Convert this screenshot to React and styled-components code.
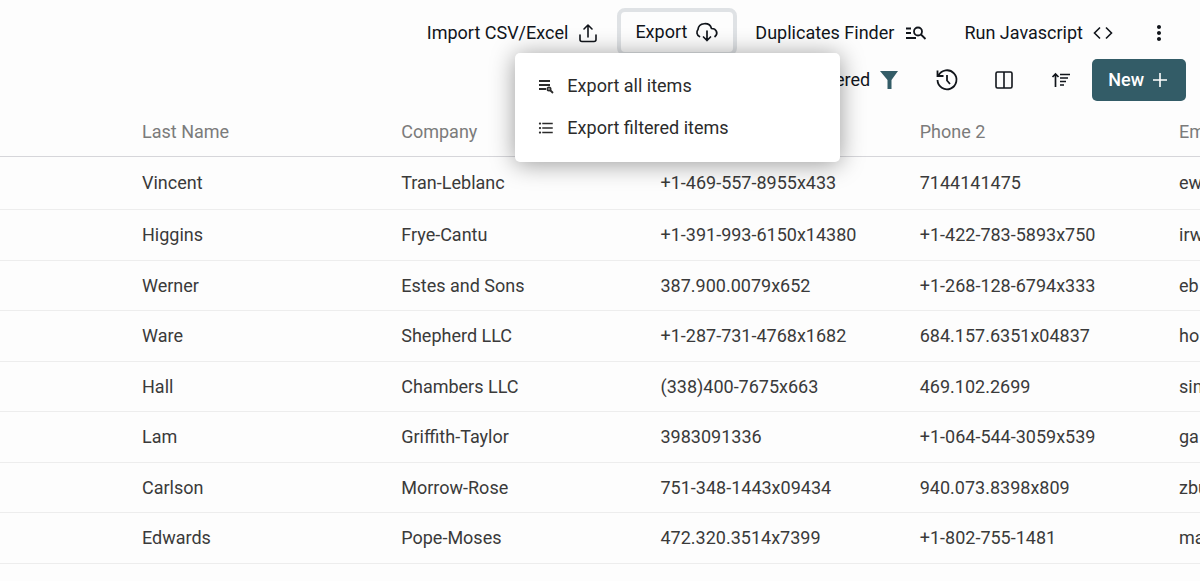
import React, { useState } from 'react'
import styled, { createGlobalStyle } from 'styled-components'
import { MdMoreVert, MdFormatListBulleted } from 'react-icons/md'

const GlobalStyle = createGlobalStyle`
    * {
        box-sizing: border-box;
    }

    body {
        margin: 0;
        background: #fdfdfd;
        color: #11151b;
        font-family: Roboto, "Liberation Sans", sans-serif;
        font-size: 18px;
        overflow-x: hidden;
    }
`;

const Page = styled.main`
    overflow: hidden;
`;

const Toolbar = styled.header`
    display: flex;
    flex-direction: column;
    align-items: flex-end;
    padding: 8px 14px 0 0;
`;

const TextButton = styled.button`
    display: flex;
    align-items: center;
    gap: ${props => props.$gap || 8}px;
    height: 48px;
    padding: 0 18px;
    border: 0;
    background: transparent;
    color: inherit;
    font: inherit;
    line-height: 24px;
    white-space: nowrap;
    cursor: pointer;

    svg {
        flex: none;
    }
`;

const Actions = styled.div`
    display: flex;
    align-items: center;
    height: 48px;

    > button {
        padding-top: 2px;
    }
`;

const OpenButton = styled(TextButton)`
    padding: 0 14px;
    border: 4px solid #dfe2e5;
    border-radius: 8px;
`;

const IconButton = styled(TextButton)`
    justify-content: center;
    width: ${props => props.$width || 57}px;
    padding: 0;
`;

const Filters = styled.div`
    display: flex;
    align-items: center;
    height: 48px;
`;

const NewButton = styled(TextButton)`
    height: 42px;
    margin-left: 3px;
    padding: 0 16px;
    border-radius: 5px;
    background: #335c67;
    color: #fff;
    font-weight: 500;
`;

const MenuAnchor = styled.div`
    position: relative;
`;

const Menu = styled.ul`
    position: absolute;
    z-index: 2;
    top: 45px;
    right: -103px;
    width: 325px;
    margin: 0;
    padding: 12px 0 13px;
    border-radius: 5px;
    background: #fff;
    box-shadow: 0 2px 24px rgba(0, 0, 0, 0.4);
    list-style: none;
`;

const MenuItem = styled.button`
    display: flex;
    align-items: center;
    gap: 12px;
    width: 100%;
    height: 42px;
    padding: 0 22px 1px;
    border: 0;
    background: transparent;
    color: #2b2b2b;
    font: inherit;
    cursor: pointer;
`;

const Table = styled.table`
    width: 100%;
    min-width: 1200px;
    table-layout: fixed;
    border-collapse: separate;
    border-spacing: 0;
    color: #3a3a3a;
`;

const HeadCell = styled.th`
    height: 53px;
    padding: 2px 0 0 12px;
    border-bottom: 1px solid #d6d6da;
    color: #7b7b7b;
    font-weight: 400;
    text-align: left;
    width: ${props => props.$width || 'auto'};
`;

const Cell = styled.td`
    height: 51px;
    padding: 0 0 1px 12px;
    border-bottom: 1px solid #ededed;
    white-space: nowrap;
`;

const Row = styled.tr`
    &:nth-child(odd) ${Cell} {
        height: 50px;
    }

    &:first-child ${Cell} {
        height: 53px;
    }
`;

const columns = ['Last Name', 'Company', 'Phone 1', 'Phone 2', 'Email']

const people = [
    ['Vincent', 'Tran-Leblanc', '+1-469-557-8955x433', '7144141475', 'ew'],
    ['Higgins', 'Frye-Cantu', '+1-391-993-6150x14380', '+1-422-783-5893x750', 'irw'],
    ['Werner', 'Estes and Sons', '387.900.0079x652', '+1-268-128-6794x333', 'eb'],
    ['Ware', 'Shepherd LLC', '+1-287-731-4768x1682', '684.157.6351x04837', 'ho'],
    ['Hall', 'Chambers LLC', '(338)400-7675x663', '469.102.2699', 'sin'],
    ['Lam', 'Griffith-Taylor', '3983091336', '+1-064-544-3059x539', 'ga'],
    ['Carlson', 'Morrow-Rose', '751-348-1443x09434', '940.073.8398x809', 'zbu'],
    ['Edwards', 'Pope-Moses', '472.320.3514x7399', '+1-802-755-1481', 'ma'],
]

const Icon = ({ size = 22, children, ...rest }) => (
    <svg
        width={size}
        height={size}
        viewBox={`0 0 ${size} ${size}`}
        fill="none"
        stroke="currentColor"
        strokeWidth="1.6"
        aria-hidden="true"
        {...rest}
    >
        {children}
    </svg>
)

export default function App() {

    const [ menuOpen, setMenuOpen ] = useState(true);

    const toggleMenu = () => {
        setMenuOpen(!menuOpen)
    }

    return (
        <Page>
            <GlobalStyle />
            <Toolbar>
                <Actions>
                    <TextButton $gap={9}>
                        Import CSV/Excel
                        <Icon strokeLinecap="round" strokeLinejoin="round">
                            <path d="M3 13v4.500a2 2 0 0 0 2 2h12a2 2 0 0 0 2-2V13M11 15V3M7 7l4-4 4 4" />
                        </Icon>
                    </TextButton>
                    <MenuAnchor>
                        <OpenButton aria-expanded={menuOpen} onClick={toggleMenu}>
                            Export
                            <Icon size={24} strokeWidth="1.7" strokeLinecap="round" strokeLinejoin="round">
                                <path d="M4.500 16.500A4.500 4.500 0 0 1 3 9.500C3.500 2.500 14.500 1.500 16.500 8.500C21.500 8.500 23.500 13.500 20 16.500M12 11v9.500M8.500 17l3.500 3.500 3.500-3.500" />
                            </Icon>
                        </OpenButton>
                        {menuOpen && (
                            <Menu>
                                <li>
                                    <MenuItem>
                                        <Icon size={18} strokeWidth="1.8">
                                            <path d="M2 4h11M2 8h11M2 12h7M13 13l3 3" />
                                            <circle cx="12" cy="12" r="1.6" />
                                        </Icon>
                                        Export all items
                                    </MenuItem>
                                </li>
                                <li>
                                    <MenuItem>
                                        <MdFormatListBulleted size={18} />
                                        Export filtered items
                                    </MenuItem>
                                </li>
                            </Menu>
                        )}
                    </MenuAnchor>
                    <TextButton $gap={10}>
                        Duplicates Finder
                        <Icon size={24} strokeWidth="1.8">
                            <path d="M2 7.500h5M2 12h5M2 17h10M17 13.500l4.500 4.500" />
                            <circle cx="14" cy="10.500" r="4" />
                        </Icon>
                    </TextButton>
                    <TextButton $gap={9}>
                        Run Javascript
                        <Icon>
                            <path d="M8 5.500L2.500 11 8 16.500M14 5.500l5.500 5.500-5.500 5.500" />
                        </Icon>
                    </TextButton>
                    <IconButton $width={54} aria-label="More">
                        <MdMoreVert size={24} />
                    </IconButton>
                </Actions>
                <Filters>
                    <TextButton>
                        Filtered
                        <Icon fill="#335c67" stroke="none">
                            <path d="M2 2h18l-6.500 9v9h-4v-9z" />
                        </Icon>
                    </TextButton>
                    <IconButton aria-label="History">
                        <Icon size={24} strokeWidth="1.8">
                            <path d="M3.500 7.500A9.500 9.500 0 1 1 2.500 12M2.500 2.500v5.500h6M12 7v5.500l3 3.500" />
                        </Icon>
                    </IconButton>
                    <IconButton aria-label="Columns">
                        <Icon>
                            <rect x="3" y="3" width="16" height="16" rx="1.5" />
                            <path d="M11 3v16" />
                        </Icon>
                    </IconButton>
                    <IconButton aria-label="Sort">
                        <Icon size={20} strokeWidth="1.7">
                            <path d="M4.500 17V4M1.500 7l3-3 3 3M9 4.500h10M9 8h8M9 11.500h6M9 15h4" />
                        </Icon>
                    </IconButton>
                    <NewButton $gap={6}>
                        New
                        <Icon size={20}>
                            <path d="M10 3v14M3 10h14" />
                        </Icon>
                    </NewButton>
                </Filters>
            </Toolbar>
            <Table>
                <thead>
                    <tr>
                        <HeadCell $width="130px" />
                        {columns.map(column => (
                            <HeadCell key={column} $width={column === 'Email' ? '33px' : 'auto'}>{column}</HeadCell>
                        ))}
                    </tr>
                </thead>
                <tbody>
                    {people.map(person => (
                        <Row key={person[0]}>
                            <Cell />
                            {person.map(value => <Cell key={value}>{value}</Cell>)}
                        </Row>
                    ))}
                </tbody>
            </Table>
        </Page>
    )
}
